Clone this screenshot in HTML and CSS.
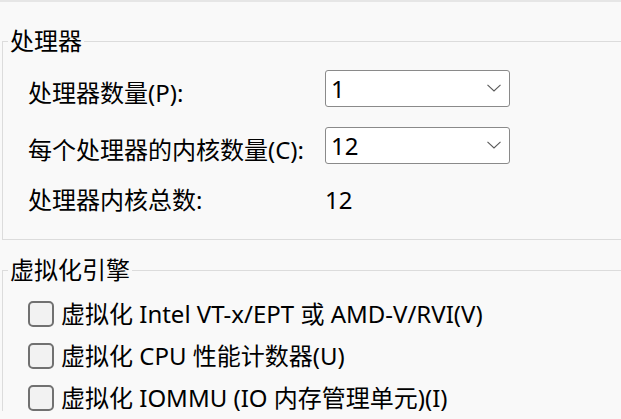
FILE: index.html
```html
<!DOCTYPE html>
<html lang="zh-CN">
<head>
<meta charset="utf-8">
<title>处理器</title>
<link rel="stylesheet" href="styles.css">
</head>
<body>
<div class="topbar"></div>
<fieldset class="group group-cpu">
  <legend class="group-title">处理器</legend>
  <div class="form-grid">
    <div class="label label-field">处理器数量(P):</div>
    <div class="combo"><span class="combo-value">1</span><svg class="chev" width="14" height="8" viewBox="0 0 14 8"><path d="M0.5 0.8 L7 7 L13.5 0.8" fill="none" stroke="#5a5a5a" stroke-width="1.1"/></svg></div>
    <div class="label label-field">每个处理器的内核数量(C):</div>
    <div class="combo"><span class="combo-value">12</span><svg class="chev" width="14" height="8" viewBox="0 0 14 8"><path d="M0.5 0.8 L7 7 L13.5 0.8" fill="none" stroke="#5a5a5a" stroke-width="1.1"/></svg></div>
    <div class="label">处理器内核总数:</div>
    <div class="static-value">12</div>
  </div>
</fieldset>
<fieldset class="group group-virt">
  <legend class="group-title">虚拟化引擎</legend>
  <div class="check-list">
    <label class="check-row"><span class="check-box"></span><span class="check-text">虚拟化 Intel VT-x/EPT 或 AMD-V/RVI(V)</span></label>
    <label class="check-row"><span class="check-box"></span><span class="check-text">虚拟化 CPU 性能计数器(U)</span></label>
    <label class="check-row"><span class="check-box"></span><span class="check-text">虚拟化 IOMMU (IO 内存管理单元)(I)</span></label>
  </div>
</fieldset>
</body>
</html>
```

FILE: styles.css
```css
html, body {
  margin: 0;
  padding: 0;
}
body {
  width: 621px;
  height: 419px;
  overflow: hidden;
  background: #f9f9f9;
  color: #000;
  font-family: "Noto Sans", "Noto Sans CJK SC", sans-serif;
  font-size: 24px;
}
.topbar {
  height: 2px;
  background: #e6e6e6;
}
.group {
  margin: 0 0 0 2px;
  padding: 0;
  border: 1px solid #dcdcdc;
  border-right: none;
  min-width: 0;
}
.group-cpu {
  margin-top: 27px;
  padding: 17px 0 23px 25px;
}
.group-virt {
  margin-top: 18px;
  padding: 19px 0 0 25px;
  border-bottom: none;
}
.group-title {
  margin-left: -20px;
  padding: 0 2px;
  line-height: 24px;
  height: 24px;
}
.form-grid {
  display: grid;
  grid-template-columns: 297px 185px;
  row-gap: 20px;
  align-items: center;
}
.label {
  line-height: 32px;
  white-space: nowrap;
}
.label-field {
  line-height: 29px;
  padding-top: 8px;
}
.combo {
  box-sizing: border-box;
  height: 37px;
  border: 1px solid #8a8a8a;
  border-radius: 3px;
  background: #fff;
  display: flex;
  align-items: center;
  justify-content: space-between;
  padding: 0 8px 0 5px;
}
.combo-value {
  line-height: 32px;
}
.chev {
  display: block;
  margin-bottom: 2px;
}
.static-value {
  line-height: 32px;
}
.check-list {
  display: flex;
  flex-direction: column;
  gap: 16px;
}
.check-row {
  display: flex;
  align-items: center;
  height: 26px;
  white-space: nowrap;
}
.check-box {
  box-sizing: border-box;
  width: 26px;
  height: 26px;
  border: 2px solid #717171;
  border-radius: 5px;
  background: #f2f2f2;
  margin-right: 7px;
  flex: none;
}
.check-text {
  line-height: 32px;
}
```
